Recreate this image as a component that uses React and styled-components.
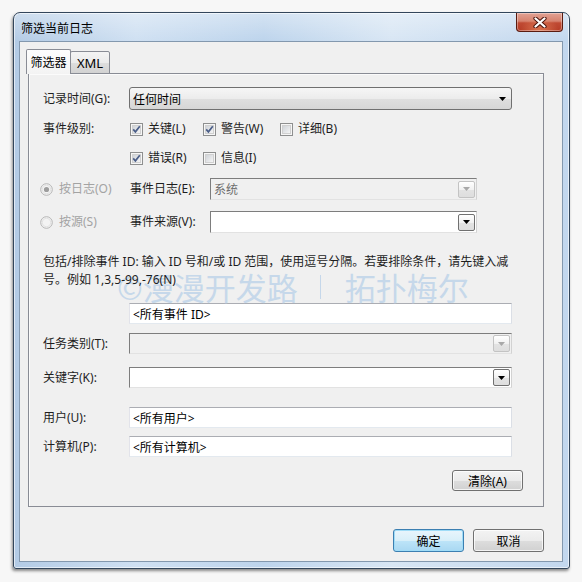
import React from "react";
import styled, { createGlobalStyle, css } from "styled-components";

const Global = createGlobalStyle`
  html, body { margin: 0; padding: 0; background: #f7f7f7; }
  body {
    font-family: "Noto Sans", "Noto Sans CJK SC", sans-serif;
    font-size: 12px;
    color: #1e1e1e;
  }
  #root { width: 582px; height: 582px; }
`;

const Page = styled.div`
  width: 582px;
  height: 582px;
  box-sizing: border-box;
  padding: 12px 0 0 13px;
`;

const Window = styled.div`
  width: 557px;
  height: 557px;
  box-sizing: border-box;
  border: 1px solid #33465b;
  border-radius: 7px 7px 3px 3px;
  background:
    linear-gradient(to bottom, rgba(255,255,255,0.35), rgba(255,255,255,0) 28px),
    linear-gradient(90deg, #b3cbe5 0%, #cfe0f2 22%, #bdd4ec 45%, #d8e6f4 68%, #c2d7ee 100%);
  box-shadow: inset 0 0 0 1px rgba(255,255,255,0.6), -1px 2px 3px rgba(0,0,0,0.45);
  display: flex;
  flex-direction: column;
  padding: 0 6px 6px 5px;
`;

const TitleBar = styled.div`
  height: 28px;
  flex: none;
  display: flex;
  align-items: flex-start;
`;

const Title = styled.div`
  line-height: 28px;
  padding: 2px 0 0 2px;
  color: #000;
`;

const CloseButton = styled.div`
  margin-left: auto;
  width: 47px;
  height: 19px;
  box-sizing: border-box;
  border: 1px solid #5a1b10;
  border-top: none;
  border-radius: 0 0 4px 4px;
  background:
    radial-gradient(ellipse at 50% 100%, rgba(255,170,120,0.5), rgba(255,170,120,0) 60%),
    linear-gradient(to bottom, #e2a294 0%, #d6826f 45%, #c04a33 55%, #b53c26 100%);
  box-shadow: inset 0 0 0 1px rgba(255,255,255,0.35);
  display: flex;
  align-items: center;
  justify-content: center;
`;

const Client = styled.div`
  flex: 1;
  box-sizing: border-box;
  border: 1px solid #8398ae;
  background: #f0f0f0;
  display: flex;
  flex-direction: column;
  align-items: flex-start;
  padding: 7px 0 0 8px;
`;

const TabStrip = styled.div`
  display: flex;
  align-items: flex-end;
  height: 25px;
  margin: 0 0 -1px -2px;
  position: relative;
  z-index: 1;
`;

const Tab = styled.div`
  box-sizing: border-box;
  display: flex;
  align-items: center;
  justify-content: center;
  border: 1px solid #898c95;
  border-radius: 2px 2px 0 0;
  color: #000;
  ${p =>
    p.$active
      ? css`
          width: 45px;
          height: 25px;
          border-bottom: none;
          background: linear-gradient(to bottom, #fdfdfd, #f3f3f3);
          padding-bottom: 1px;
        `
      : css`
          width: 40px;
          height: 23px;
          margin-left: -1px;
          background: linear-gradient(to bottom, #f4f4f4 0%, #ebebeb 50%, #dedede 50%, #d2d2d2 100%);
          font-size: 13px;
        `}
`;

const Panel = styled.div`
  position: relative;
  width: 516px;
  height: 434px;
  box-sizing: border-box;
  border: 1px solid #898c95;
  background: #f0f0f0;
  box-shadow: inset 1px 1px 0 #fbfbfb;
  padding: 0 0 0 14px;
  display: flex;
  flex-direction: column;
`;

const Row = styled.div`
  display: flex;
  align-items: ${p => (p.$top ? "flex-start" : "center")};
  margin-top: ${p => p.$mt || 0}px;
  margin-left: ${p => p.$ml || 0}px;
`;

const Label = styled.div`
  width: ${p => p.$w || 86}px;
  flex: none;
  line-height: 18px;
  white-space: nowrap;
  color: ${p => (p.$disabled ? "#a3a3a3" : "#1e1e1e")};
`;

const Combo = styled.div`
  width: ${p => p.$w || 383}px;
  height: ${p => p.$h || 21}px;
  box-sizing: border-box;
  flex: none;
  display: flex;
  align-items: center;
  justify-content: space-between;
  padding: 0 1px 0 3px;
  ${p =>
    p.$variant === "button"
      ? css`
          border: 1px solid #707070;
          border-radius: 3px;
          background: linear-gradient(to bottom, #f6f6f6 0%, #ececec 50%, #dfdfdf 52%, #d6d6d6 100%);
          padding-right: 5px;
          color: #000;
        `
      : css`
          border-style: solid;
          border-width: 1px;
          border-color: #7d7d7d #d2d2d2 #e2e2e2 #7d7d7d;
          background: ${p.$variant === "disabled" ? "#f0f0f0" : "#ffffff"};
          color: ${p.$variant === "disabled" ? "#6d6d6d" : "#000"};
        `}
`;

const DropBox = styled.div`
  width: 17px;
  height: 17px;
  box-sizing: border-box;
  border: 1px solid ${p => (p.$disabled ? "#c3c3c3" : "#707070")};
  border-radius: 2px;
  background: linear-gradient(to bottom, #ffffff 0%, #f1f1f1 50%, #e3e3e3 52%, #dedede 100%);
  display: flex;
  align-items: center;
  justify-content: center;
`;

const TextBox = styled.div`
  width: 383px;
  height: ${p => p.$h || 21}px;
  box-sizing: border-box;
  flex: none;
  border-style: solid;
  border-width: 1px;
  border-color: #abadb3 #dbdfe6 #e3e9ef #e2e3ea;
  background: #fff;
  display: flex;
  align-items: center;
  padding-left: 3px;
  color: #000;
`;

const CheckGrid = styled.div`
  display: grid;
  grid-template-columns: 73px 77px auto;
  grid-auto-rows: 18px;
  row-gap: 11px;
  margin-left: 1px;
`;

const Option = styled.label`
  display: flex;
  align-items: center;
  gap: ${p => p.$gap || 5}px;
  white-space: nowrap;
  line-height: 18px;
  color: ${p => (p.$disabled ? "#a3a3a3" : "#1e1e1e")};
`;

const RadioCell = styled.div`
  width: 90px;
  flex: none;
`;

const Paragraph = styled.div`
  position: relative;
  z-index: 1;
  margin-top: 20px;
  line-height: 18px;
  white-space: nowrap;
  color: #1e1e1e;
`;

const Watermark = styled.div`
  position: absolute;
  left: 88px;
  top: 198px;
  font-family: "Noto Sans CJK SC", sans-serif;
  font-size: 31px;
  line-height: 30px;
  color: #c6d8ea;
  white-space: nowrap;
  display: flex;
  align-items: center;
  pointer-events: none;
`;

const WatermarkBar = styled.span`
  display: inline-block;
  width: 1px;
  height: 24px;
  background: #c5d7ea;
  margin: 0 24px 0 22px;
`;

const Button = styled.button`
  width: 71px;
  height: ${p => p.$h || 23}px;
  box-sizing: border-box;
  padding: 0;
  font: inherit;
  color: #000;
  border-radius: 3px;
  border: 1px solid ${p => (p.$primary ? "#3c7fb1" : "#707070")};
  background: ${p =>
    p.$primary
      ? "linear-gradient(to bottom, #e9f5fc 0%, #d8eff9 50%, #bde4f8 52%, #a9d8f2 100%)"
      : "linear-gradient(to bottom, #f3f3f3 0%, #ebebeb 50%, #dddddd 52%, #d1d1d1 100%)"};
  box-shadow: inset 0 0 0 1px ${p => (p.$primary ? "#9fdcf7" : "rgba(255,255,255,0.75)")};
  display: flex;
  align-items: center;
  justify-content: center;
`;

const ClearRow = styled.div`
  display: flex;
  justify-content: flex-end;
  margin-top: 13px;
  padding-right: 20px;
`;

const Footer = styled.div`
  width: 516px;
  display: flex;
  justify-content: flex-end;
  gap: 9px;
  margin-top: 22px;
`;

const Arrow = ({ color = "#000" }) => (
  <svg width="7" height="4" viewBox="0 0 7 4">
    <path d="M0 0H7L3.5 4Z" fill={color} />
  </svg>
);

const CheckBox = ({ checked }) => (
  <svg width="13" height="13" viewBox="0 0 13 13" style={{ flex: "none" }}>
    <defs>
      <linearGradient id="cbfill" x1="0" y1="0" x2="1" y2="1">
        <stop offset="0" stopColor="#cdd1d6" />
        <stop offset="1" stopColor="#f7f7f7" />
      </linearGradient>
    </defs>
    <rect x="0.5" y="0.5" width="12" height="12" fill="#f6f6f6" stroke="#8e8f8f" />
    <rect x="2.5" y="2.5" width="8" height="8" fill="url(#cbfill)" stroke="#d0d0d0" />
    {checked && (
      <path d="M3.2 6.4 L5.4 8.9 L9.8 3.3" fill="none" stroke="#4b5e88" strokeWidth="1.7" />
    )}
  </svg>
);

const Radio = ({ checked }) => (
  <svg width="13" height="13" viewBox="0 0 13 13" style={{ flex: "none" }}>
    <circle cx="6.5" cy="6.5" r="5.8" fill="#f3f3f3" stroke="#b5b5b5" />
    <circle cx="6.5" cy="6.5" r="4.2" fill="none" stroke="#e2e2e2" />
    {checked && <circle cx="6.5" cy="6.5" r="2.6" fill="#9d9d9d" />}
  </svg>
);

const CloseGlyph = () => (
  <svg width="14" height="11" viewBox="0 0 14 11">
    <path d="M2.5 1.5 L11.5 9.5 M11.5 1.5 L2.5 9.5" stroke="#4a120a" strokeWidth="4.2" strokeLinecap="round" />
    <path d="M2.5 1.5 L11.5 9.5 M11.5 1.5 L2.5 9.5" stroke="#ffffff" strokeWidth="2.3" strokeLinecap="round" />
  </svg>
);

export default function App() {
  return (
    <Page>
      <Global />
      <Window>
        <TitleBar>
          <Title>筛选当前日志</Title>
          <CloseButton>
            <CloseGlyph />
          </CloseButton>
        </TitleBar>
        <Client>
          <TabStrip>
            <Tab $active>筛选器</Tab>
            <Tab>XML</Tab>
          </TabStrip>
          <Panel>
            <Watermark>
              <span>©漫漫开发路</span>
              <WatermarkBar />
              <span>拓扑梅尔</span>
            </Watermark>

            <Row $mt={13}>
              <Label>记录时间(G):</Label>
              <Combo $variant="button" $h={23}>
                <span>任何时间</span>
                <Arrow />
              </Combo>
            </Row>

            <Row $mt={10} $top>
              <Label>事件级别:</Label>
              <CheckGrid>
                <Option><CheckBox checked />关键(L)</Option>
                <Option><CheckBox checked />警告(W)</Option>
                <Option><CheckBox />详细(B)</Option>
                <Option><CheckBox checked />错误(R)</Option>
                <Option><CheckBox />信息(I)</Option>
              </CheckGrid>
            </Row>

            <Row $mt={11} $ml={-3}>
              <RadioCell>
                <Option $disabled $gap={6}><Radio checked />按日志(O)</Option>
              </RadioCell>
              <Label $w={80}>事件日志(E):</Label>
              <Combo $variant="disabled" $w={267} $h={22}>
                <span>系统</span>
                <DropBox $disabled><Arrow color="#a8a8a8" /></DropBox>
              </Combo>
            </Row>

            <Row $mt={11} $ml={-3}>
              <RadioCell>
                <Option $disabled $gap={6}><Radio />按源(S)</Option>
              </RadioCell>
              <Label $w={80}>事件来源(V):</Label>
              <Combo $variant="edit" $w={267} $h={22}>
                <span />
                <DropBox><Arrow /></DropBox>
              </Combo>
            </Row>

            <Paragraph>
              包括/排除事件 ID: 输入 ID 号和/或 ID 范围，使用逗号分隔。若要排除条件，请先键入减
              <br />
              号。例如 1,3,5-99,-76(N)
            </Paragraph>

            <Row $mt={14}>
              <Label />
              <TextBox>&lt;所有事件 ID&gt;</TextBox>
            </Row>

            <Row $mt={9}>
              <Label>任务类别(T):</Label>
              <Combo $variant="disabled">
                <span />
                <DropBox $disabled><Arrow color="#a8a8a8" /></DropBox>
              </Combo>
            </Row>

            <Row $mt={13}>
              <Label>关键字(K):</Label>
              <Combo $variant="edit">
                <span />
                <DropBox><Arrow /></DropBox>
              </Combo>
            </Row>

            <Row $mt={19}>
              <Label>用户(U):</Label>
              <TextBox>&lt;所有用户&gt;</TextBox>
            </Row>

            <Row $mt={8}>
              <Label>计算机(P):</Label>
              <TextBox>&lt;所有计算机&gt;</TextBox>
            </Row>

            <ClearRow>
              <Button $h={21}>清除(A)</Button>
            </ClearRow>
          </Panel>
          <Footer>
            <Button $primary>确定</Button>
            <Button>取消</Button>
          </Footer>
        </Client>
      </Window>
    </Page>
  );
}
